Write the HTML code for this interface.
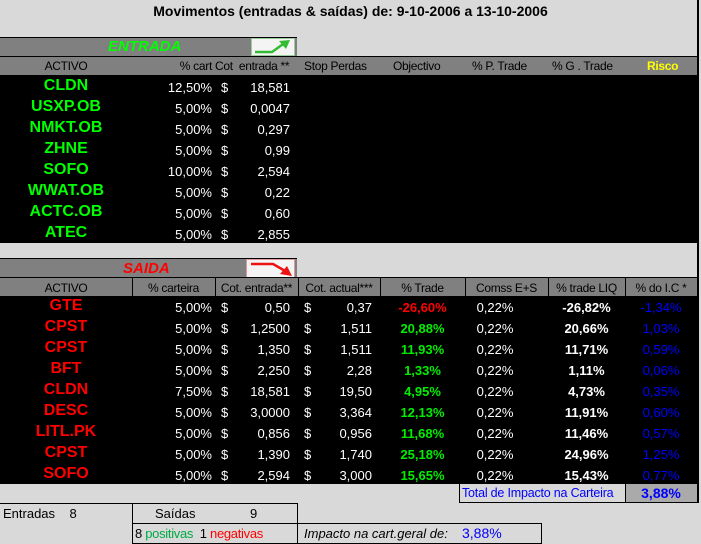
<!DOCTYPE html>
<html><head><meta charset="utf-8"><style>
*{margin:0;padding:0;box-sizing:border-box}
body{width:701px;height:544px;background:#d9d9d9;position:relative;overflow:hidden;font-family:"Liberation Sans",Arial,sans-serif;font-size:13px}
div{position:absolute;white-space:nowrap}
.t{font-weight:bold;font-size:16px;width:132px;text-align:center;left:0}
.g{color:#00ff00}.r{color:#ff0000}.w{color:#fff}.y{color:#ffff00}.b{color:#0000ff}
.R{text-align:right}.C{text-align:center}
.h{font-size:12px;letter-spacing:-0.3px}
.vl{width:1px;background:#000;top:278px;height:18px}
</style></head><body>
<div style="left:0;top:3px;width:701px;text-align:center;font-weight:bold;font-size:14px">Movimentos (entradas &amp; saídas) de: 9-10-2006 a 13-10-2006</div>
<div style="left:697px;top:0;width:2px;height:503px;background:#000"></div>

<div style="left:0;top:37px;width:297px;height:20px;background:#808080;border-top:1px solid #000"></div>
<div class="g" style="left:108px;top:38px;font-style:italic;font-weight:bold;font-size:15px">ENTRADA</div>
<div style="left:251px;top:38px;width:44px;height:18px;background:#f4f4f4;border:1px solid #9c9"><svg width="42" height="16" viewBox="0 0 42 16"><path d="M3 13 H20 L34 3" stroke="#33bb33" stroke-width="2.5" fill="none"/><path d="M27 2 L38 1 L34 10 Z" fill="#33bb33"/></svg></div>
<div style="left:0;top:56px;width:697px;height:19px;background:#808080;border-top:1px solid #000"></div>
<div class="h C" style="left:0;top:59px;width:132px">ACTIVO</div>
<div class="h R" style="left:150px;top:59px;width:62px">% cart</div>
<div class="h" style="left:215px;top:59px">Cot&nbsp; entrada **</div>
<div class="h" style="left:304px;top:59px">Stop Perdas</div>
<div class="h" style="left:393px;top:59px">Objectivo</div>
<div class="h" style="left:472px;top:59px">% P. Trade</div>
<div class="h" style="left:552px;top:59px">% G . Trade</div>
<div class="h y" style="left:647px;top:59px;font-weight:bold">Risco</div>
<div style="left:0;top:75px;width:697px;height:168px;background:#000"></div>

<div class="t g" style="top:77px">CLDN</div>
<div class="t g" style="top:98px">USXP.OB</div>
<div class="t g" style="top:119px">NMKT.OB</div>
<div class="t g" style="top:140px">ZHNE</div>
<div class="t g" style="top:161px">SOFO</div>
<div class="t g" style="top:182px">WWAT.OB</div>
<div class="t g" style="top:203px">ACTC.OB</div>
<div class="t g" style="top:224px">ATEC</div>

<div class="w R" style="left:140px;top:77px;width:72px;line-height:21px">12,50%<br>5,00%<br>5,00%<br>5,00%<br>10,00%<br>5,00%<br>5,00%<br>5,00%</div>
<div class="w" style="left:221px;top:77px;line-height:21px">$<br>$<br>$<br>$<br>$<br>$<br>$<br>$</div>
<div class="w R" style="left:230px;top:77px;width:60px;line-height:21px">18,581<br>0,0047<br>0,297<br>0,99<br>2,594<br>0,22<br>0,60<br>2,855</div>

<div style="left:0;top:258px;width:297px;height:20px;background:#808080;border-top:1px solid #000"></div>
<div class="r" style="left:123px;top:260px;font-style:italic;font-weight:bold;font-size:15px">SAIDA</div>
<div style="left:246px;top:259px;width:49px;height:19px;background:#f4f4f4;border:1px solid #d99"><svg width="47" height="17" viewBox="0 0 47 17"><path d="M4 4 H26 L40 12" stroke="#ee1111" stroke-width="2.5" fill="none"/><path d="M33 14 L45 16 L40 6 Z" fill="#ee1111"/></svg></div>
<div style="left:0;top:277px;width:697px;height:20px;background:#808080;border-top:1px solid #000"></div>
<div class="vl" style="left:132px"></div><div class="vl" style="left:215px"></div><div class="vl" style="left:298px"></div><div class="vl" style="left:380px"></div><div class="vl" style="left:465px"></div><div class="vl" style="left:548px"></div><div class="vl" style="left:625px"></div>
<div class="h C" style="left:0;top:281px;width:132px">ACTIVO</div>
<div class="h C" style="left:132px;top:281px;width:83px">% carteira</div>
<div class="h C" style="left:215px;top:281px;width:83px">Cot. entrada**</div>
<div class="h C" style="left:298px;top:281px;width:82px">Cot. actual***</div>
<div class="h C" style="left:380px;top:281px;width:85px">% Trade</div>
<div class="h C" style="left:465px;top:281px;width:83px">Comss E+S</div>
<div class="h C" style="left:548px;top:281px;width:77px">% trade LIQ</div>
<div class="h C" style="left:625px;top:281px;width:72px">% do I.C *</div>
<div style="left:0;top:296px;width:697px;height:188px;background:#000"></div>

<div class="t r" style="top:297px">GTE</div>
<div class="t r" style="top:318px">CPST</div>
<div class="t r" style="top:339px">CPST</div>
<div class="t r" style="top:360px">BFT</div>
<div class="t r" style="top:381px">CLDN</div>
<div class="t r" style="top:402px">DESC</div>
<div class="t r" style="top:423px">LITL.PK</div>
<div class="t r" style="top:444px">CPST</div>
<div class="t r" style="top:465px">SOFO</div>

<div class="w R" style="left:140px;top:297px;width:72px;line-height:21px">5,00%<br>5,00%<br>5,00%<br>5,00%<br>7,50%<br>5,00%<br>5,00%<br>5,00%<br>5,00%</div>
<div class="w" style="left:221px;top:297px;line-height:21px">$<br>$<br>$<br>$<br>$<br>$<br>$<br>$<br>$</div>
<div class="w R" style="left:230px;top:297px;width:60px;line-height:21px">0,50<br>1,2500<br>1,350<br>2,250<br>18,581<br>3,0000<br>0,856<br>1,390<br>2,594</div>
<div class="w" style="left:304px;top:297px;line-height:21px">$<br>$<br>$<br>$<br>$<br>$<br>$<br>$<br>$</div>
<div class="w R" style="left:312px;top:297px;width:60px;line-height:21px">0,37<br>1,511<br>1,511<br>2,28<br>19,50<br>3,364<br>0,956<br>1,740<br>3,000</div>
<div class="C" style="left:380px;top:297px;width:85px;line-height:21px;font-weight:bold;color:#00ee00"><span class="r">-26,60%</span><br>20,88%<br>11,93%<br>1,33%<br>4,95%<br>12,13%<br>11,68%<br>25,18%<br>15,65%</div>
<div class="w C" style="left:465px;top:297px;width:60px;line-height:21px">0,22%<br>0,22%<br>0,22%<br>0,22%<br>0,22%<br>0,22%<br>0,22%<br>0,22%<br>0,22%</div>
<div class="w C" style="left:548px;top:297px;width:77px;line-height:21px;font-weight:bold">-26,82%<br>20,66%<br>11,71%<br>1,11%<br>4,73%<br>11,91%<br>11,46%<br>24,96%<br>15,43%</div>
<div class="b C" style="left:625px;top:297px;width:72px;line-height:21px">-1,34%<br>1,03%<br>0,59%<br>0,06%<br>0,35%<br>0,60%<br>0,57%<br>1,25%<br>0,77%</div>

<div style="left:459px;top:484px;width:167px;height:19px;border-left:1px solid #000;border-bottom:1px solid #000"></div>
<div class="b" style="left:462px;top:486px;font-size:12.5px;letter-spacing:-0.2px">Total de Impacto na Carteira</div>
<div style="left:625px;top:484px;width:72px;height:19px;background:#aaa;border-left:1px solid #000;border-bottom:1px solid #000"></div>
<div class="b C" style="left:625px;top:485px;width:72px;font-weight:bold;font-size:14px">3,88%</div>

<div style="left:0;top:503px;width:132px;height:20px;border-top:1px solid #000"></div>
<div style="left:3px;top:506px">Entradas&nbsp;&nbsp;&nbsp; 8</div>
<div style="left:132px;top:503px;width:166px;height:41px;border:1px solid #000"></div>
<div style="left:132px;top:523px;width:166px;height:1px;background:#000"></div>
<div style="left:155px;top:506px">Saídas</div>
<div style="left:250px;top:506px">9</div>
<div style="left:135px;top:526px;letter-spacing:-0.3px">8 <span style="color:#00aa44">positivas</span>&nbsp; 1 <span class="r">negativas</span></div>
<div style="left:297px;top:523px;width:245px;height:21px;border:1px solid #000"></div>
<div style="left:304px;top:526px;font-style:italic">Impacto na cart.geral de:</div>
<div class="b" style="left:462px;top:525px;font-size:14px">3,88%</div>
</body></html>
